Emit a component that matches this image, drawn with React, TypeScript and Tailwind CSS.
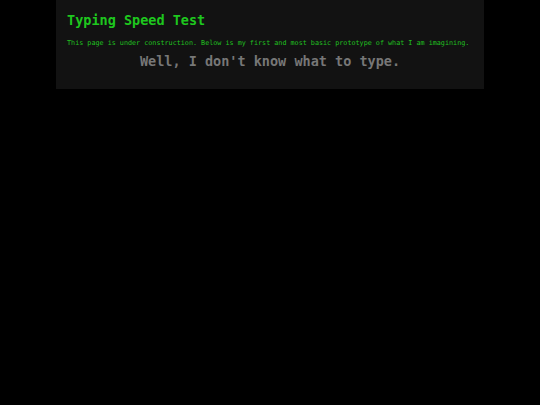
import React from "react";

export default function App() {
  return (
    <div className="min-h-[405px] w-full bg-black" style={{ fontFamily: '"DejaVu Sans Mono", monospace' }}>
      <div className="mx-auto w-[428px] bg-[#121212] px-[11px] pt-[12px] pb-[19px]">
        <h1 className="text-[13.5px] font-bold leading-[17px] text-[#1ec71e]">Typing Speed Test</h1>
        <p className="mt-[10px] text-[6.75px] leading-[9px] text-[#20c020] whitespace-nowrap">
          This page is under construction. Below is my first and most basic prototype of what I am imagining.
        </p>
        <p className="mt-[5px] text-center text-[13.5px] font-bold leading-[17px] text-[#777777]">
          Well, I don't know what to type.
        </p>
      </div>
    </div>
  );
}
